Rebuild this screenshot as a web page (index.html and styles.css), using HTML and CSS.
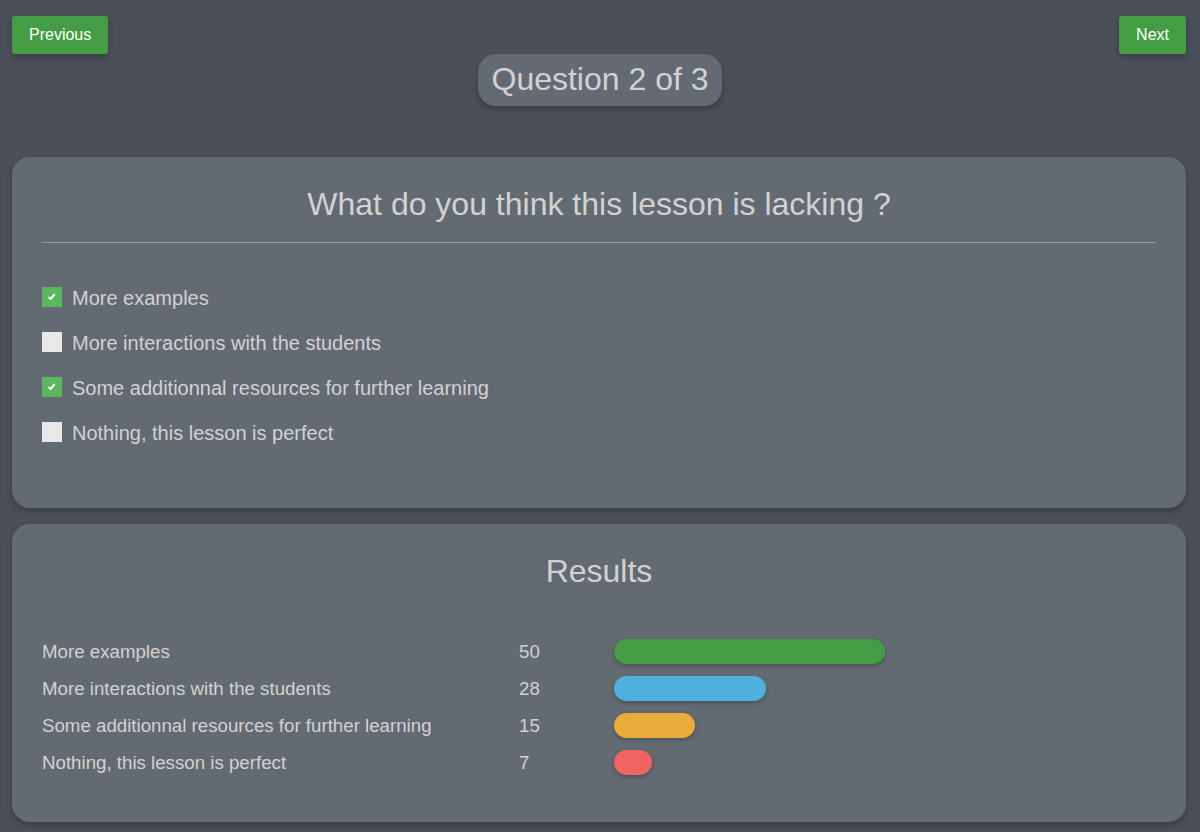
FILE: index.html
```html
<!DOCTYPE html>
<html lang="en">
<head>
<meta charset="utf-8">
<title>Quiz</title>
<link rel="stylesheet" href="styles.css">
</head>
<body>
<div class="page">
  <div class="nav">
    <button class="btn">Previous</button>
    <button class="btn">Next</button>
  </div>
  <div class="pill-wrap"><div class="pill">Question 2 of 3</div></div>

  <section class="card question">
    <h2 class="title">What do you think this lesson is lacking ?</h2>
    <hr class="divider">
    <ul class="options">
      <li class="option"><span class="box checked"><svg viewBox="0 0 20 20" width="20" height="20"><path d="M7.2 10.6 L8.6 12 L12.2 7.6" fill="none" stroke="#fff" stroke-width="2" stroke-linecap="round" stroke-linejoin="round"/></svg></span>More examples</li>
      <li class="option"><span class="box"></span>More interactions with the students</li>
      <li class="option"><span class="box checked"><svg viewBox="0 0 20 20" width="20" height="20"><path d="M7.2 10.6 L8.6 12 L12.2 7.6" fill="none" stroke="#fff" stroke-width="2" stroke-linecap="round" stroke-linejoin="round"/></svg></span>Some additionnal resources for further learning</li>
      <li class="option"><span class="box"></span>Nothing, this lesson is perfect</li>
    </ul>
  </section>

  <section class="card results">
    <h2 class="title">Results</h2>
    <div class="rows">
      <div class="row"><span class="label">More examples</span><span class="num">50</span><span class="bar green" style="width:271px"></span></div>
      <div class="row"><span class="label">More interactions with the students</span><span class="num">28</span><span class="bar blue" style="width:152px"></span></div>
      <div class="row"><span class="label">Some additionnal resources for further learning</span><span class="num">15</span><span class="bar yellow" style="width:81px"></span></div>
      <div class="row"><span class="label">Nothing, this lesson is perfect</span><span class="num">7</span><span class="bar red" style="width:38px"></span></div>
    </div>
  </section>
</div>
</body>
</html>
```
FILE: styles.css
```css
* { box-sizing: border-box; }
html, body { margin: 0; padding: 0; }
body {
  background: #4a4f59;
  font-family: "Liberation Sans", Arial, sans-serif;
  color: #d2d2d2;
}
.page {
  padding: 16px 14px 10px 12px;
}
.nav {
  display: flex;
  justify-content: space-between;
  align-items: flex-start;
}
.btn {
  background: #449d44;
  color: #fff;
  border: none;
  border-radius: 3px;
  font-family: "Liberation Sans", Arial, sans-serif;
  font-size: 16px;
  line-height: 26px;
  padding: 6px 17px;
  height: 38px;
  box-shadow: 0 3px 6px rgba(0,0,0,0.25);
}
.pill-wrap {
  display: flex;
  justify-content: center;
  margin-right: -2px;
}
.pill {
  background: #646a72;
  border-radius: 18px;
  height: 52px;
  padding: 0 13px;
  font-size: 32px;
  line-height: 50px;
  box-shadow: 0 3px 6px rgba(0,0,0,0.25);
}
.card {
  background: #646a72;
  border-radius: 18px;
  box-shadow: 0 3px 6px rgba(0,0,0,0.25);
  padding: 30px 30px;
}
.question {
  margin-top: 51px;
  height: 351px;
}
.results {
  margin-top: 16px;
  height: 298px;
}
.title {
  margin: 0;
  font-size: 32px;
  font-weight: normal;
  line-height: 34px;
  text-align: center;
}
.divider {
  border: none;
  border-top: 1px solid #9a9a9a;
  margin: 21px 0 0;
}
.options {
  list-style: none;
  margin: 43px 0 0;
  padding: 0;
  display: flex;
  flex-direction: column;
  gap: 20px;
}
.option {
  display: flex;
  align-items: center;
  gap: 10px;
  height: 25px;
  font-size: 20px;
}
.box {
  width: 20px;
  height: 20px;
  background: #e8e8e8;
  display: inline-block;
  flex: none;
  margin-top: -4px;
}
.box svg { display: block; }
.box.checked { background: #5cb85c; }
.rows {
  margin-top: 51px;
  display: flex;
  flex-direction: column;
  gap: 12px;
}
.row {
  display: grid;
  grid-template-columns: 477px 95px 1fr;
  align-items: center;
  height: 25px;
  font-size: 18.7px;
}
.bar {
  display: block;
  height: 25px;
  border-radius: 13px;
  box-shadow: 0 2px 4px rgba(0,0,0,0.25);
}
.green { background: #449d44; }
.blue { background: #4fb0dc; }
.yellow { background: #e9ab3a; }
.red { background: #f26463; }
```
